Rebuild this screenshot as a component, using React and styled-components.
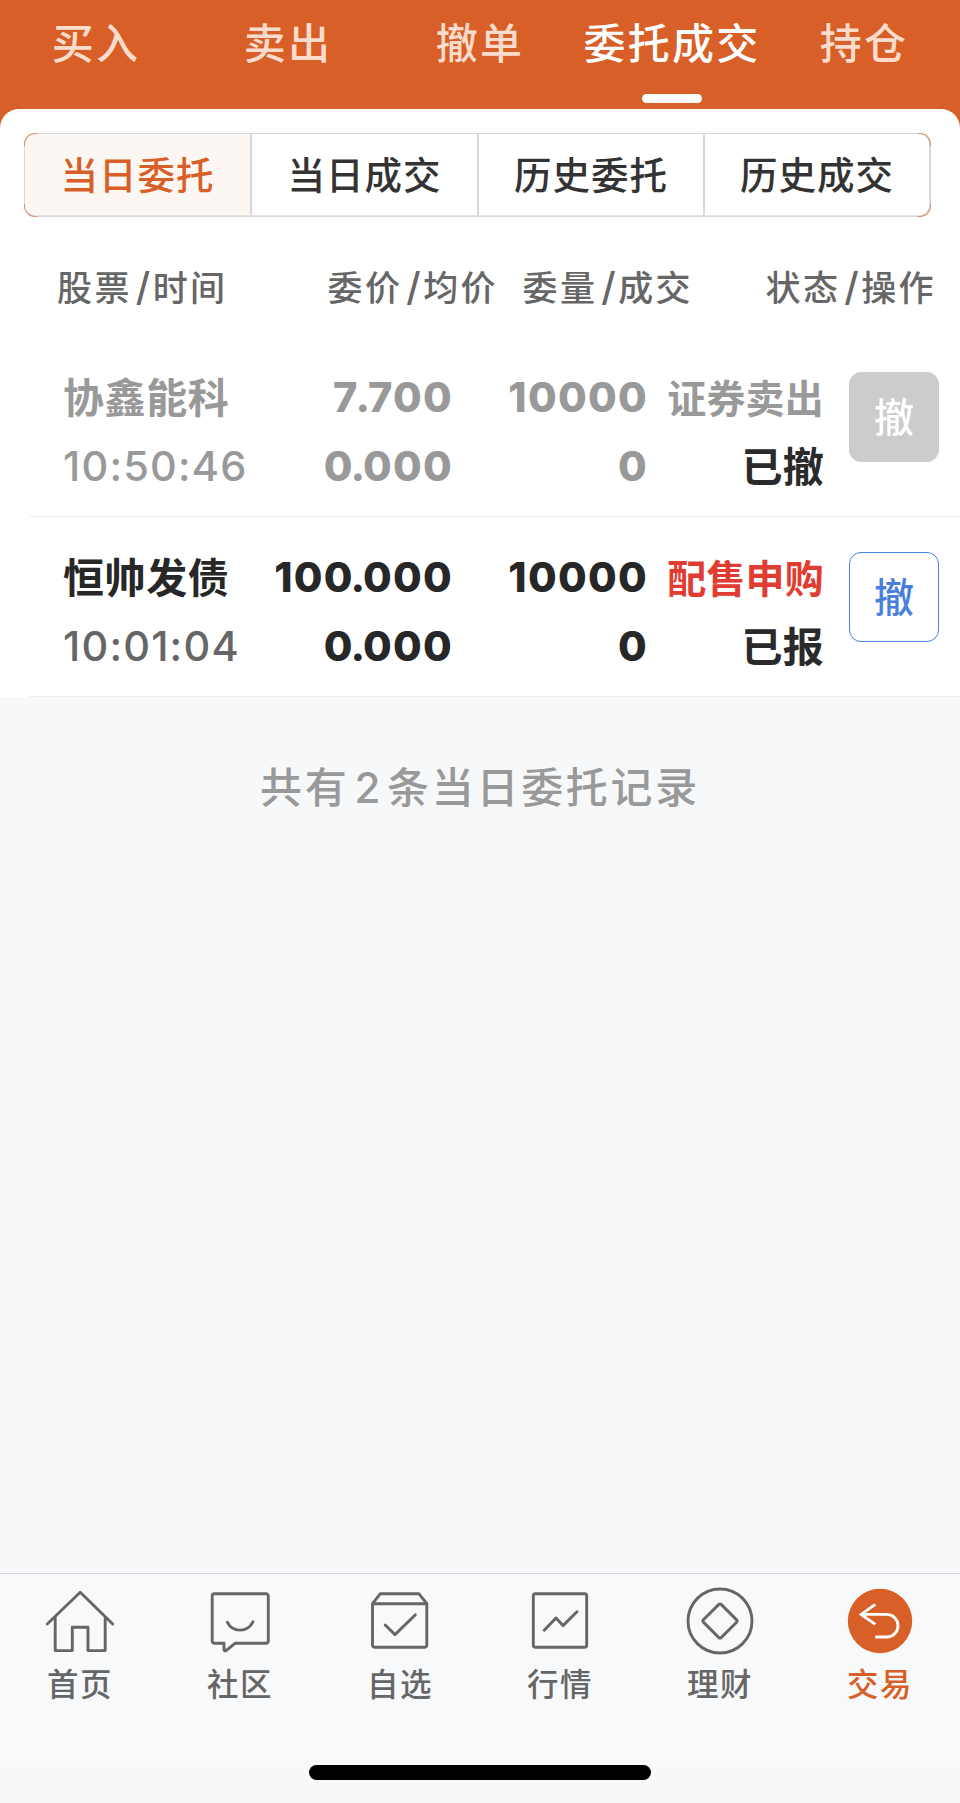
import React, { useState } from 'react';
import styled, { createGlobalStyle } from 'styled-components';

const ORANGE = '#d85f27';
const LINE = '#d6d8dc';

const GlobalStyle = createGlobalStyle`
  * {
    box-sizing: border-box;
  }

  body {
    margin: 0;
    background: #f7f8fa;
    font-family: Inter, 'Noto Sans CJK SC', sans-serif;
    font-weight: 500;
  }

  button {
    margin: 0;
    padding: 0;
    border: none;
    background: none;
    font: inherit;
    color: inherit;
    cursor: pointer;
  }
`;

const Screen = styled.div`
  display: flex;
  flex-direction: column;
  width: 960px;
  height: 1803px;
  background: linear-gradient(${ORANGE} 150px, #f7f8fa 150px);
`;

const TopTabs = styled.nav`
  display: grid;
  grid-template-columns: repeat(5, 1fr);
  height: 109px;
`;

const TopTab = styled.button`
  display: flex;
  flex-direction: column;
  align-items: center;
  padding-top: 14px;
  font-size: 42px;
  line-height: 60px;
  letter-spacing: 2.2px;
  white-space: nowrap;
  color: ${({ $active }) => ($active ? '#fff' : '#f9dccb')};

  &::after {
    content: '';
    width: 60px;
    height: 9px;
    margin-top: 20px;
    border-radius: 4.5px;
    background: ${({ $active }) => ($active ? '#fff' : 'transparent')};
  }
`;

const Card = styled.main`
  height: 588px;
  padding-top: 24px;
  border-radius: 19px 19px 0 0;
  background: #fff;
`;

/* grey straight edges, orange only on the rounded corners */
const Segments = styled.div`
  display: grid;
  grid-template-columns: 225px 227px 226px 1fr;
  width: 907px;
  height: 84px;
  margin-left: 24px;
  padding: 1px;
  border-radius: 11px;
  background:
    linear-gradient(${LINE}, ${LINE}) center / calc(100% - 26px) 100% no-repeat,
    linear-gradient(${LINE}, ${LINE}) center / 100% calc(100% - 26px) no-repeat,
    #d4906c;
`;

const Segment = styled.button`
  padding-top: 2px;
  border-left: 2px solid ${LINE};
  border-bottom: 1px solid #e2e4e7;
  background: ${({ $active }) => ($active ? '#fcf7f3' : '#fff')};
  color: ${({ $active }) => ($active ? ORANGE : '#333')};
  font-size: 37.5px;
  line-height: 79px;
  letter-spacing: 1px;

  &:first-child {
    border-left: none;
    border-radius: 10px 0 0 10px;
  }

  &:last-child {
    border-right: 1px solid ${LINE};
    border-radius: 0 10px 10px 0;
  }
`;

const ListHead = styled.div`
  display: grid;
  grid-template-columns: 230px 211px 195px 1fr;
  height: 120px;
  padding: 43px 24px 0 57px;
  font-size: 35px;
  line-height: 54px;
  letter-spacing: 2.4px;
  color: #666;
`;

const HeadCell = styled.span`
  text-align: right;
  white-space: nowrap;

  &:first-child {
    text-align: left;
  }
`;

const Slash = styled.span`
  margin-left: 4px;
  font-size: 39px;
`;

const Row = styled.div`
  display: grid;
  grid-template-columns: 200px 190px 195px 176px 90px;
  height: 180px;
  margin-left: 30px;
  padding: 27px 21px 0 33px;
  border-bottom: 1px solid #e9eaec;
  color: ${({ $done }) => ($done ? '#999' : '#272727')};
`;

const Cell = styled.div`
  display: flex;
  flex-direction: column;
  align-items: ${({ $left }) => ($left ? 'flex-start' : 'flex-end')};
  font-size: 41.5px;
  font-weight: 700;
  line-height: 69px;
  letter-spacing: 2px;
  white-space: nowrap;
`;

const Figure = styled.span`
  margin: -1px 0 1px;
  font-weight: 760;
  letter-spacing: 1.3px;
`;

/* the digit before the decimal point and the point itself sit tighter */
const Point = styled.span`
  font-kerning: none;
  letter-spacing: -2.1px;
`;

const StockName = styled.span`
  font-size: 41px;
  letter-spacing: 0.6px;
`;

const Time = styled.span`
  margin: -1px 0 1px;
  font-size: 41.5px;
  font-weight: 500;
  letter-spacing: 1.2px;
  color: ${({ $done }) => ($done ? '#999' : '#666')};
`;

const Side = styled.span`
  font-size: 39px;
  letter-spacing: 0.2px;
  color: ${({ $buy }) => ($buy ? '#e03c32' : 'inherit')};
`;

const Status = styled.span`
  font-size: 41px;
  letter-spacing: 0.3px;
  color: #2a2a2a;
`;

const CancelButton = styled.button`
  width: 90px;
  height: 90px;
  margin: 8px 0 0 25px;
  border: 1px solid #4880dc;
  border-radius: 12px;
  font-size: 40px;
  line-height: 90px;
  color: #4880dc;

  &:disabled {
    border-color: #ccc;
    background: #ccc;
    color: #fff;
  }
`;

const Summary = styled.p`
  flex: 1;
  margin: 0;
  padding-top: 59px;
  font-size: 42px;
  line-height: 64px;
  letter-spacing: 2.7px;
  text-align: center;
  color: #999;
`;

const Count = styled.span`
  margin: 0 4px 0 5px;
`;

const TabBar = styled.nav`
  display: grid;
  grid-template-columns: repeat(6, 1fr);
  height: 192px;
  border-top: 1px solid ${LINE};
  background: #f8f9fb;
`;

const TabItem = styled.button`
  display: flex;
  flex-direction: column;
  align-items: center;
  padding-top: 11px;
  font-size: 31.5px;
  line-height: 44px;
  letter-spacing: 1.5px;
  color: ${({ $active }) => ($active ? ORANGE : '#666')};

  svg {
    width: 72px;
    height: 72px;
    margin-bottom: 6px;
    fill: none;
    stroke: currentColor;
    stroke-width: 2.9;
    stroke-linecap: round;
    stroke-linejoin: round;
  }
`;

const HomeIndicator = styled.div`
  flex: none;
  width: 342px;
  height: 15px;
  margin: 0 auto 23px;
  border-radius: 7.5px;
  background: #000;
`;

const TOP_TABS = ['买入', '卖出', '撤单', '委托成交', '持仓'];
const SEGMENTS = ['当日委托', '当日成交', '历史委托', '历史成交'];
const COLUMNS = [
  ['股票', '时间'],
  ['委价', '均价'],
  ['委量', '成交'],
  ['状态', '操作'],
];

const ORDERS = [
  {
    name: '协鑫能科',
    time: '10:50:46',
    price: '7.700',
    avg: '0.000',
    amount: '10000',
    filled: '0',
    side: '证券卖出',
    status: '已撤',
    done: true,
  },
  {
    name: '恒帅发债',
    time: '10:01:04',
    price: '100.000',
    avg: '0.000',
    amount: '10000',
    filled: '0',
    side: '配售申购',
    status: '已报',
    done: false,
  },
];

const HomeIcon = () => (
  <svg viewBox="0 0 72 72">
    <path d="M3.3 39 36.2 7.2 68.7 39" />
    <path d="M11.2 33V65.6H28.3V42.2H44V65.6H61.2V33" />
  </svg>
);

const CommunityIcon = () => (
  <svg viewBox="0 0 72 72">
    <path d="M10.5 8.8H62a2.3 2.3 0 0 1 2.3 2.3V56a2.3 2.3 0 0 1-2.3 2.3H31L22 65.6Q20 66.5 20 64.5V58.3H10.5A2.3 2.3 0 0 1 8.2 56V11.1a2.3 2.3 0 0 1 2.3-2.3Z" />
    <path d="M23.3 37.2C28.5 47.8 43.5 47.8 49 36.8" />
  </svg>
);

const WatchlistIcon = () => (
  <svg viewBox="0 0 72 72">
    <path d="M8.5 18.7 16.2 8.8H55L62.8 18.7V60a2.3 2.3 0 0 1-2.3 2.3H10.8A2.3 2.3 0 0 1 8.5 60ZH62.8" />
    <path d="M21.2 40 31 49.6 51.4 29.8" />
  </svg>
);

const MarketIcon = () => (
  <svg viewBox="0 0 72 72">
    <rect x="9.3" y="8.8" width="53.4" height="53.5" rx="2.3" />
    <path d="M20.2 45.2 32 33 39 40.6 53 26.8" />
  </svg>
);

const WealthIcon = () => (
  <svg viewBox="0 0 72 72">
    <circle cx="36" cy="36" r="32" />
    <path d="M34.6 19.6a2 2 0 0 1 2.8 0L52.4 34.6a2 2 0 0 1 0 2.8L37.4 52.4a2 2 0 0 1-2.8 0L19.6 37.4a2 2 0 0 1 0-2.8Z" />
  </svg>
);

const TradeIcon = () => (
  <svg viewBox="0 0 72 72">
    <circle cx="36" cy="36" r="32.2" fill={ORANGE} stroke="none" />
    <path
      d="M31.3 19.4 17.2 29.4 31.3 39.4M17.2 29.4H42.7a11.3 11.3 0 0 1 0 22.6H31.3"
      stroke="#fff"
      strokeLinecap="butt"
      strokeLinejoin="miter"
    />
  </svg>
);

const NAV_ITEMS = [
  { label: '首页', Icon: HomeIcon },
  { label: '社区', Icon: CommunityIcon },
  { label: '自选', Icon: WatchlistIcon },
  { label: '行情', Icon: MarketIcon },
  { label: '理财', Icon: WealthIcon },
  { label: '交易', Icon: TradeIcon },
];

const Price = ({ value }) => {
  const dot = value.indexOf('.');
  return (
    <Figure>
      {value.slice(0, dot - 1)}
      <Point>{value.slice(dot - 1, dot + 1)}</Point>
      {value.slice(dot + 1)}
    </Figure>
  );
};

const OrderRow = ({ order }) => (
  <Row $done={order.done}>
    <Cell $left>
      <StockName>{order.name}</StockName>
      <Time $done={order.done}>{order.time}</Time>
    </Cell>
    <Cell>
      <Price value={order.price} />
      <Price value={order.avg} />
    </Cell>
    <Cell>
      <Figure>{order.amount}</Figure>
      <Figure>{order.filled}</Figure>
    </Cell>
    <Cell>
      <Side $buy={!order.done}>{order.side}</Side>
      <Status>{order.status}</Status>
    </Cell>
    <CancelButton disabled={order.done}>撤</CancelButton>
  </Row>
);

const App = () => {
  const [topTab, setTopTab] = useState('委托成交');
  const [segment, setSegment] = useState('当日委托');

  return (
    <>
      <GlobalStyle />
      <Screen>
        <TopTabs>
          {TOP_TABS.map(tab => (
            <TopTab key={tab} $active={tab === topTab} onClick={() => setTopTab(tab)}>
              {tab}
            </TopTab>
          ))}
        </TopTabs>
        <Card>
          <Segments>
            {SEGMENTS.map(item => (
              <Segment key={item} $active={item === segment} onClick={() => setSegment(item)}>
                {item}
              </Segment>
            ))}
          </Segments>
          <ListHead>
            {COLUMNS.map(([first, second]) => (
              <HeadCell key={first}>
                {first}
                <Slash>/</Slash>
                {second}
              </HeadCell>
            ))}
          </ListHead>
          {ORDERS.map(order => (
            <OrderRow key={order.name} order={order} />
          ))}
        </Card>
        <Summary>
          共有<Count>{ORDERS.length}</Count>条当日委托记录
        </Summary>
        <TabBar>
          {NAV_ITEMS.map(({ label, Icon }) => (
            <TabItem key={label} $active={label === '交易'}>
              <Icon />
              {label}
            </TabItem>
          ))}
        </TabBar>
        <HomeIndicator />
      </Screen>
    </>
  );
};

export default App;
